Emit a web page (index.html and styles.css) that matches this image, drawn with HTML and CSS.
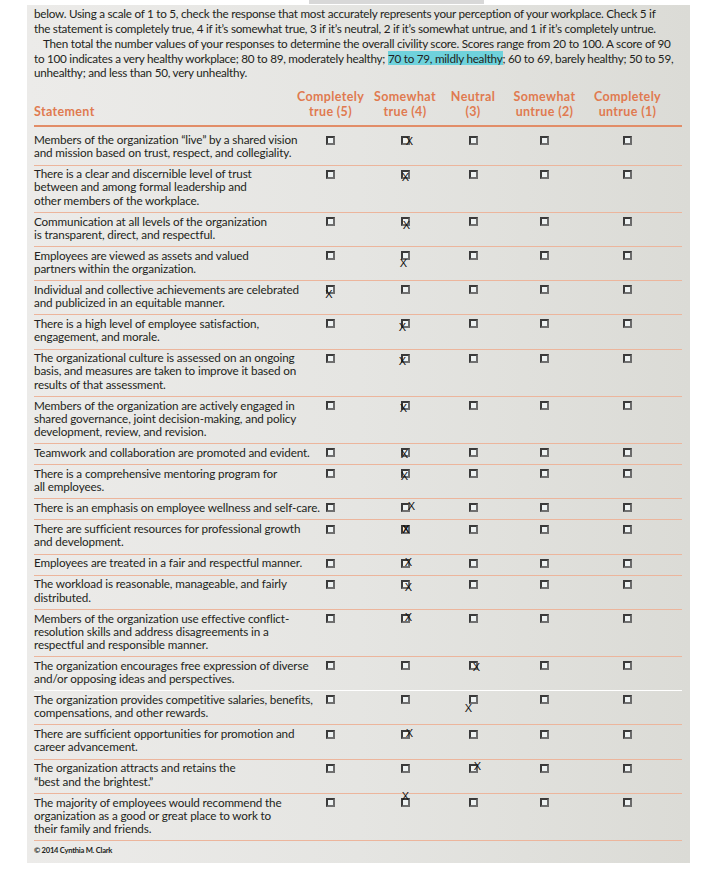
FILE: index.html
```html
<!DOCTYPE html>
<html lang="en">
<head>
<meta charset="utf-8">
<title>Civility survey</title>
<link rel="stylesheet" href="styles.css">
</head>
<body>
<div class="topbar"></div>
<div class="panel">
  <div class="intro">
    <p class="p1">below. Using a scale of 1 to 5, check the response that most accurately represents your perception of your workplace. Check 5 if<br>the statement is completely true, 4 if it’s somewhat true, 3 if it’s neutral, 2 if it’s somewhat untrue, and 1 if it’s completely untrue.</p>
    <p class="p2">Then total the number values of your responses to determine the overall civility score. Scores range from 20 to 100. A score of 90<br>to 100 indicates a very healthy workplace; 80 to 89, moderately healthy; <mark class="hl">70 to 79, mildly healthy</mark>; 60 to 69, barely healthy; 50 to 59,<br>unhealthy; and less than 50, very unhealthy.</p>
  </div>

  <div class="survey">
    <div class="row head">
      <div class="stmt">Statement</div>
      <div class="label">Completely<br>true (5)</div>
      <div class="label">Somewhat<br>true (4)</div>
      <div class="label">Neutral<br>(3)</div>
      <div class="label">Somewhat<br>untrue (2)</div>
      <div class="label">Completely<br>untrue (1)</div>
    </div>

    <div class="row first">
      <div class="stmt">Members of the organization “live” by a shared vision<br>and mission based on trust, respect, and collegiality.</div>
      <div class="cell"><span class="box"></span></div>
      <div class="cell"><span class="box"><span class="x" style="--dx:4.5px;--dy:0.5px">X</span></span></div>
      <div class="cell"><span class="box"></span></div>
      <div class="cell"><span class="box"></span></div>
      <div class="cell"><span class="box"></span></div>
    </div>

    <div class="row">
      <div class="stmt">There is a clear and discernible level of trust<br>between and among formal leadership and<br>other members of the workplace.</div>
      <div class="cell"><span class="box"></span></div>
      <div class="cell"><span class="box"><span class="x" style="--dx:0.5px;--dy:2.5px">X</span></span></div>
      <div class="cell"><span class="box"></span></div>
      <div class="cell"><span class="box"></span></div>
      <div class="cell"><span class="box"></span></div>
    </div>

    <div class="row">
      <div class="stmt">Communication at all levels of the organization<br>is transparent, direct, and respectful.</div>
      <div class="cell"><span class="box"></span></div>
      <div class="cell"><span class="box"><span class="x" style="--dx:1.5px;--dy:3.5px">X</span></span></div>
      <div class="cell"><span class="box"></span></div>
      <div class="cell"><span class="box"></span></div>
      <div class="cell"><span class="box"></span></div>
    </div>

    <div class="row">
      <div class="stmt">Employees are viewed as assets and valued<br>partners within the organization.</div>
      <div class="cell"><span class="box"></span></div>
      <div class="cell"><span class="box"><span class="x" style="--dx:-1.5px;--dy:7px">X</span></span></div>
      <div class="cell"><span class="box"></span></div>
      <div class="cell"><span class="box"></span></div>
      <div class="cell"><span class="box"></span></div>
    </div>

    <div class="row">
      <div class="stmt">Individual and collective achievements are celebrated<br>and publicized in an equitable manner.</div>
      <div class="cell"><span class="box"><span class="x" style="--dx:-1.5px;--dy:4px">X</span></span></div>
      <div class="cell"><span class="box"></span></div>
      <div class="cell"><span class="box"></span></div>
      <div class="cell"><span class="box"></span></div>
      <div class="cell"><span class="box"></span></div>
    </div>

    <div class="row">
      <div class="stmt">There is a high level of employee satisfaction,<br>engagement, and morale.</div>
      <div class="cell"><span class="box"></span></div>
      <div class="cell"><span class="box"><span class="x" style="--dx:-2.5px;--dy:3.5px">X</span></span></div>
      <div class="cell"><span class="box"></span></div>
      <div class="cell"><span class="box"></span></div>
      <div class="cell"><span class="box"></span></div>
    </div>

    <div class="row">
      <div class="stmt">The organizational culture is assessed on an ongoing<br>basis, and measures are taken to improve it based on<br>results of that assessment.</div>
      <div class="cell"><span class="box"></span></div>
      <div class="cell"><span class="box"><span class="x" style="--dx:-2.5px;--dy:2.5px">X</span></span></div>
      <div class="cell"><span class="box"></span></div>
      <div class="cell"><span class="box"></span></div>
      <div class="cell"><span class="box"></span></div>
    </div>

    <div class="row">
      <div class="stmt">Members of the organization are actively engaged in<br>shared governance, joint decision-making, and policy<br>development, review, and revision.</div>
      <div class="cell"><span class="box"></span></div>
      <div class="cell"><span class="box"><span class="x" style="--dx:-1.5px;--dy:2.5px">X</span></span></div>
      <div class="cell"><span class="box"></span></div>
      <div class="cell"><span class="box"></span></div>
      <div class="cell"><span class="box"></span></div>
    </div>

    <div class="row">
      <div class="stmt">Teamwork and collaboration are promoted and evident.</div>
      <div class="cell"><span class="box"></span></div>
      <div class="cell"><span class="box"><span class="x" style="--dx:-0.5px;--dy:1.5px">X</span></span></div>
      <div class="cell"><span class="box"></span></div>
      <div class="cell"><span class="box"></span></div>
      <div class="cell"><span class="box"></span></div>
    </div>

    <div class="row">
      <div class="stmt">There is a comprehensive mentoring program for<br>all employees.</div>
      <div class="cell"><span class="box"></span></div>
      <div class="cell"><span class="box"><span class="x" style="--dx:-0.5px;--dy:2px">X</span></span></div>
      <div class="cell"><span class="box"></span></div>
      <div class="cell"><span class="box"></span></div>
      <div class="cell"><span class="box"></span></div>
    </div>

    <div class="row">
      <div class="stmt">There is an emphasis on employee wellness and self-care.</div>
      <div class="cell"><span class="box"></span></div>
      <div class="cell"><span class="box"><span class="x" style="--dx:6.5px;--dy:-1.5px">X</span></span></div>
      <div class="cell"><span class="box"></span></div>
      <div class="cell"><span class="box"></span></div>
      <div class="cell"><span class="box"></span></div>
    </div>

    <div class="row">
      <div class="stmt">There are sufficient resources for professional growth<br>and development.</div>
      <div class="cell"><span class="box"></span></div>
      <div class="cell"><span class="box"><span class="x bold" style="--dx:1px;--dy:0px">X</span></span></div>
      <div class="cell"><span class="box"></span></div>
      <div class="cell"><span class="box"></span></div>
      <div class="cell"><span class="box"></span></div>
    </div>

    <div class="row">
      <div class="stmt">Employees are treated in a fair and respectful manner.</div>
      <div class="cell"><span class="box"></span></div>
      <div class="cell"><span class="box"><span class="x" style="--dx:3.5px;--dy:-1px">X</span></span></div>
      <div class="cell"><span class="box"></span></div>
      <div class="cell"><span class="box"></span></div>
      <div class="cell"><span class="box"></span></div>
    </div>

    <div class="row">
      <div class="stmt">The workload is reasonable, manageable, and fairly<br>distributed.</div>
      <div class="cell"><span class="box"></span></div>
      <div class="cell"><span class="box"><span class="x" style="--dx:3.5px;--dy:2.5px">X</span></span></div>
      <div class="cell"><span class="box"></span></div>
      <div class="cell"><span class="box"></span></div>
      <div class="cell"><span class="box"></span></div>
    </div>

    <div class="row">
      <div class="stmt">Members of the organization use effective conflict-<br>resolution skills and address disagreements in a<br>respectful and responsible manner.</div>
      <div class="cell"><span class="box"></span></div>
      <div class="cell"><span class="box"><span class="x" style="--dx:3.5px;--dy:-1px">X</span></span></div>
      <div class="cell"><span class="box"></span></div>
      <div class="cell"><span class="box"></span></div>
      <div class="cell"><span class="box"></span></div>
    </div>

    <div class="row white">
      <div class="stmt">The organization encourages free expression of diverse<br>and/or opposing ideas and perspectives.</div>
      <div class="cell"><span class="box"></span></div>
      <div class="cell"><span class="box"></span></div>
      <div class="cell"><span class="box"><span class="x" style="--dx:3.5px;--dy:1px">X</span></span></div>
      <div class="cell"><span class="box"></span></div>
      <div class="cell"><span class="box"></span></div>
    </div>

    <div class="row">
      <div class="stmt">The organization provides competitive salaries, benefits,<br>compensations, and other rewards.</div>
      <div class="cell"><span class="box"></span></div>
      <div class="cell"><span class="box"></span></div>
      <div class="cell"><span class="box"><span class="x" style="--dx:-4.5px;--dy:8.5px">X</span></span></div>
      <div class="cell"><span class="box"></span></div>
      <div class="cell"><span class="box"></span></div>
    </div>

    <div class="row">
      <div class="stmt">There are sufficient opportunities for promotion and<br>career advancement.</div>
      <div class="cell"><span class="box"></span></div>
      <div class="cell"><span class="box"><span class="x" style="--dx:4.5px;--dy:-1px">X</span></span></div>
      <div class="cell"><span class="box"></span></div>
      <div class="cell"><span class="box"></span></div>
      <div class="cell"><span class="box"></span></div>
    </div>

    <div class="row">
      <div class="stmt">The organization attracts and retains the<br>“best and the brightest.”</div>
      <div class="cell"><span class="box"></span></div>
      <div class="cell"><span class="box"></span></div>
      <div class="cell"><span class="box"><span class="x" style="--dx:4.5px;--dy:-2px">X</span></span></div>
      <div class="cell"><span class="box"></span></div>
      <div class="cell"><span class="box"></span></div>
    </div>

    <div class="row">
      <div class="stmt">The majority of employees would recommend the<br>organization as a good or great place to work to<br>their family and friends.</div>
      <div class="cell"><span class="box"></span></div>
      <div class="cell"><span class="box"><span class="x" style="--dx:0.5px;--dy:-6.5px">X</span></span></div>
      <div class="cell"><span class="box"></span></div>
      <div class="cell"><span class="box"></span></div>
      <div class="cell"><span class="box"></span></div>
    </div>
  </div>

  <div class="copy">© 2014 Cynthia M. Clark</div>
</div>
</body>
</html>
```

FILE: styles.css
```css
* { box-sizing: border-box; }

html, body {
  margin: 0;
  padding: 0;
  background: #ffffff;
}

body {
  width: 704px;
  font-family: Lato, "Open Sans", sans-serif;
  color: #231f20;
}

.topbar {
  margin-left: 309px;
  width: 175px;
  height: 4px;
  background: #d8d8d8;
}

.panel {
  margin: 1px 0 0 27px;
  width: 663px;
  height: 858px;
  padding: 1.3px 8px 0 7px;
  background: linear-gradient(90deg, #ecebe9 0%, #e5e5e2 50%, #dbdbd6 100%);
}

.intro p {
  margin: 0;
  font-size: 11.7px;
  line-height: 14.75px;
  letter-spacing: -0.25px;
  white-space: nowrap;
}

.intro .p2 {
  text-indent: 9px;
}

.hl {
  background: #6fd2dc;
  color: inherit;
}

.survey {
  margin-top: 9.4px;
}

.row {
  display: grid;
  grid-template-columns: 263px 67px 82px 54px 89px 77px;
  padding: 1.8px 0 5.2px;
  border-bottom: 1px solid #ecb59c;
}

.row.first {
  padding-top: 6.2px;
}

.row.white {
  border-bottom-color: #ffffff;
}

.row.head {
  padding: 0 0 5.6px;
  border-bottom: 2px solid #e28d68;
  color: #e07a50;
  font-weight: 700;
  font-size: 12.5px;
  line-height: 15px;
  letter-spacing: 0.35px;
}

.head .stmt {
  align-self: end;
  font-size: 12.5px;
  line-height: 15px;
  letter-spacing: 0.35px;
}

.label {
  text-align: center;
  white-space: nowrap;
}

.stmt {
  font-size: 11.7px;
  line-height: 13.1px;
  letter-spacing: -0.13px;
  white-space: nowrap;
}

.cell {
  display: flex;
  justify-content: center;
  align-items: flex-start;
}

.box {
  position: relative;
  display: block;
  width: 9px;
  height: 9px;
  margin-top: 2.3px;
  border: 2px solid #3a3a3a;
  border-right-color: #6b6b6b;
  border-bottom-color: #707070;
  background: #eef2f2;
}

.x {
  position: absolute;
  left: calc(50% + var(--dx));
  top: calc(50% + var(--dy));
  transform: translate(-50%, -50%);
  display: block;
  font-family: "Liberation Sans", Arial, sans-serif;
  font-size: 11px;
  line-height: 11px;
  letter-spacing: 0;
  color: #111111;
}

.x.bold {
  font-weight: 700;
}

.copy {
  margin-top: 4px;
  font-size: 7.6px;
  font-weight: 700;
  letter-spacing: -0.25px;
  line-height: 10px;
  color: #231f20;
}
```
